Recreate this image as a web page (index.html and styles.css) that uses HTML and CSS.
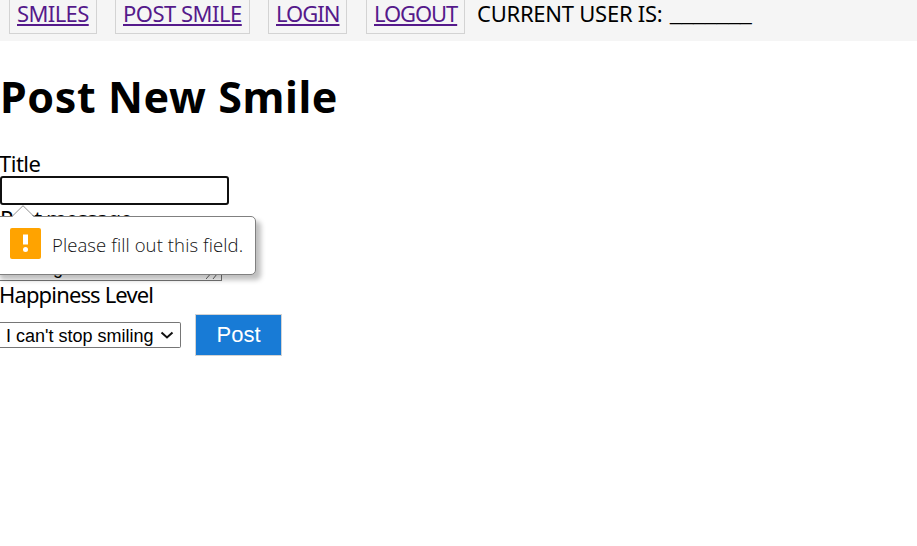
FILE: index.html
```html
<!DOCTYPE html>
<html lang="en">
<head>
<meta charset="utf-8">
<title>Post New Smile</title>
<link rel="stylesheet" href="styles.css">
</head>
<body>
<nav class="nav">
  <a class="link smiles" href="#"><span>SMILES</span></a>
  <a class="link post-smile" href="#"><span>POST SMILE</span></a>
  <a class="link login" href="#"><span>LOGIN</span></a>
  <a class="link logout" href="#"><span>LOGOUT</span></a>
  <span class="user">CURRENT USER IS:</span><span class="blank">_______</span>
</nav>
<main>
  <h1>Post New Smile</h1>
  <form class="form">
    <label class="label title" for="title">Title</label>
    <div class="field">
      <input class="input" id="title" type="text">
      <div class="tip">
        <svg class="arrow" width="22" height="12" viewBox="0 0 22 12"><path d="M0 12 11 1 22 12z" fill="#fff"/><path d="M0 11.5 11 .7 22 11.5" fill="none" stroke="#909090"/></svg>
        <svg class="warn" width="31" height="31" viewBox="0 0 31 31"><rect width="31" height="31" rx="2" fill="#ffa300"/><path d="M13 6.500h5v10h-5z" fill="#fff"/><circle cx="15.5" cy="21.500" r="2.500" fill="#fff"/></svg>
        <span class="tip-text">Please fill out this field.</span>
      </div>
    </div>
    <label class="label message" for="message">Post message</label>
    <div class="area" id="message"><span>message</span>
      <svg class="grip" width="12" height="9" viewBox="0 0 12 9"><path d="M0 9 7 1M7 9l4-5" fill="none" stroke="#666"/></svg>
    </div>
    <label class="label level">Happiness Level</label>
    <div class="row">
      <div class="select"><span>I can't stop smiling</span><svg width="14" height="9" viewBox="0 0 14 9"><path d="M1.500 1.500 7 6.500 12.500 1.500" fill="none" stroke="#111" stroke-width="2"/></svg></div>
      <button class="button" type="button">Post</button>
    </div>
  </form>
</main>
</body>
</html>
```
FILE: styles.css
```css
* { box-sizing: border-box; }
body {
  margin: 0;
  height: 546px;
  overflow: hidden;
  background: #fff;
  color: #000;
  font: 22px/26px "Noto Sans", sans-serif;
}
.nav {
  display: flex;
  height: 41px;
  padding-left: 9px;
  background: #f5f5f5;
  white-space: nowrap;
}
.link {
  height: 34px;
  margin-right: 18px;
  padding: 0 0 0 7px;
  border: 1px solid #d3d3d3;
  border-top: 0;
  color: #551a8b;
  text-decoration-thickness: 2px;
  text-underline-offset: 2px;
}
.smiles { width: 88px; letter-spacing: -0.6px; }
.post-smile { width: 135px; letter-spacing: -0.5px; }
.login { width: 79px; margin-right: 19px; letter-spacing: -1px; }
.logout { width: 99px; margin-right: 12px; letter-spacing: -1.1px; }
.user { width: 193px; letter-spacing: -0.25px; }
.blank { font: 21px/26px "Liberation Sans", sans-serif; }
h1 {
  height: 52px;
  margin: 30px 0 27px;
  font-size: 43px;
  line-height: 52px;
  letter-spacing: 0.6px;
  white-space: nowrap;
}
.form { display: flex; flex-direction: column; align-items: flex-start; }
.label { height: 26px; white-space: nowrap; letter-spacing: -0.95px; }
.title { margin-left: -1px; letter-spacing: -0.5px; }
.field { position: relative; height: 29px; }
.input {
  display: block;
  width: 229px;
  height: 29px;
  border: 2px solid #101010;
  border-radius: 3px;
  outline: 0;
  background: #fff;
}
.tip {
  position: absolute;
  z-index: 2;
  top: 40px;
  left: -6px;
  display: flex;
  align-items: center;
  width: 262px;
  height: 59px;
  padding: 0 0 4px 15px;
  border: 1px solid #808080;
  border-radius: 5px;
  background: #fff;
  box-shadow: 5px 5px 5px rgba(0, 0, 0, .25);
}
.arrow { position: absolute; top: -12px; left: 17px; }
.tip-text {
  margin: 2px 0 0 11px;
  color: #111;
  font: 300 18.5px/28px "Open Sans", "Noto Sans", sans-serif;
  letter-spacing: 0.1px;
  white-space: nowrap;
}
.area {
  position: relative;
  display: flex;
  align-items: flex-end;
  width: 222px;
  height: 50px;
  padding-bottom: 2px;
  border: 1px solid #767676;
  border-left: 0;
  font: 18px/20px "Liberation Sans", sans-serif;
}
.grip { position: absolute; right: 3px; bottom: 1px; }
.level { margin-left: -1px; letter-spacing: -0.85px; }
.row { display: flex; align-items: flex-start; margin-top: 7px; }
.select {
  display: flex;
  align-items: center;
  width: 181px;
  height: 26px;
  margin: 8px 14px 0 0;
  padding: 1px 0 0 6px;
  border: 1px solid #767676;
  border-left: 0;
  border-radius: 0 2px 2px 0;
  font: 18px/24px "Liberation Sans", sans-serif;
  white-space: nowrap;
}
.select svg { margin-left: 6px; }
.button {
  width: 87px;
  height: 42px;
  padding: 0 0 1px;
  border: 1px solid #d3d3d3;
  background: #187bd6;
  color: #fff;
  font: 22px/25px "Liberation Sans", sans-serif;
}
```
